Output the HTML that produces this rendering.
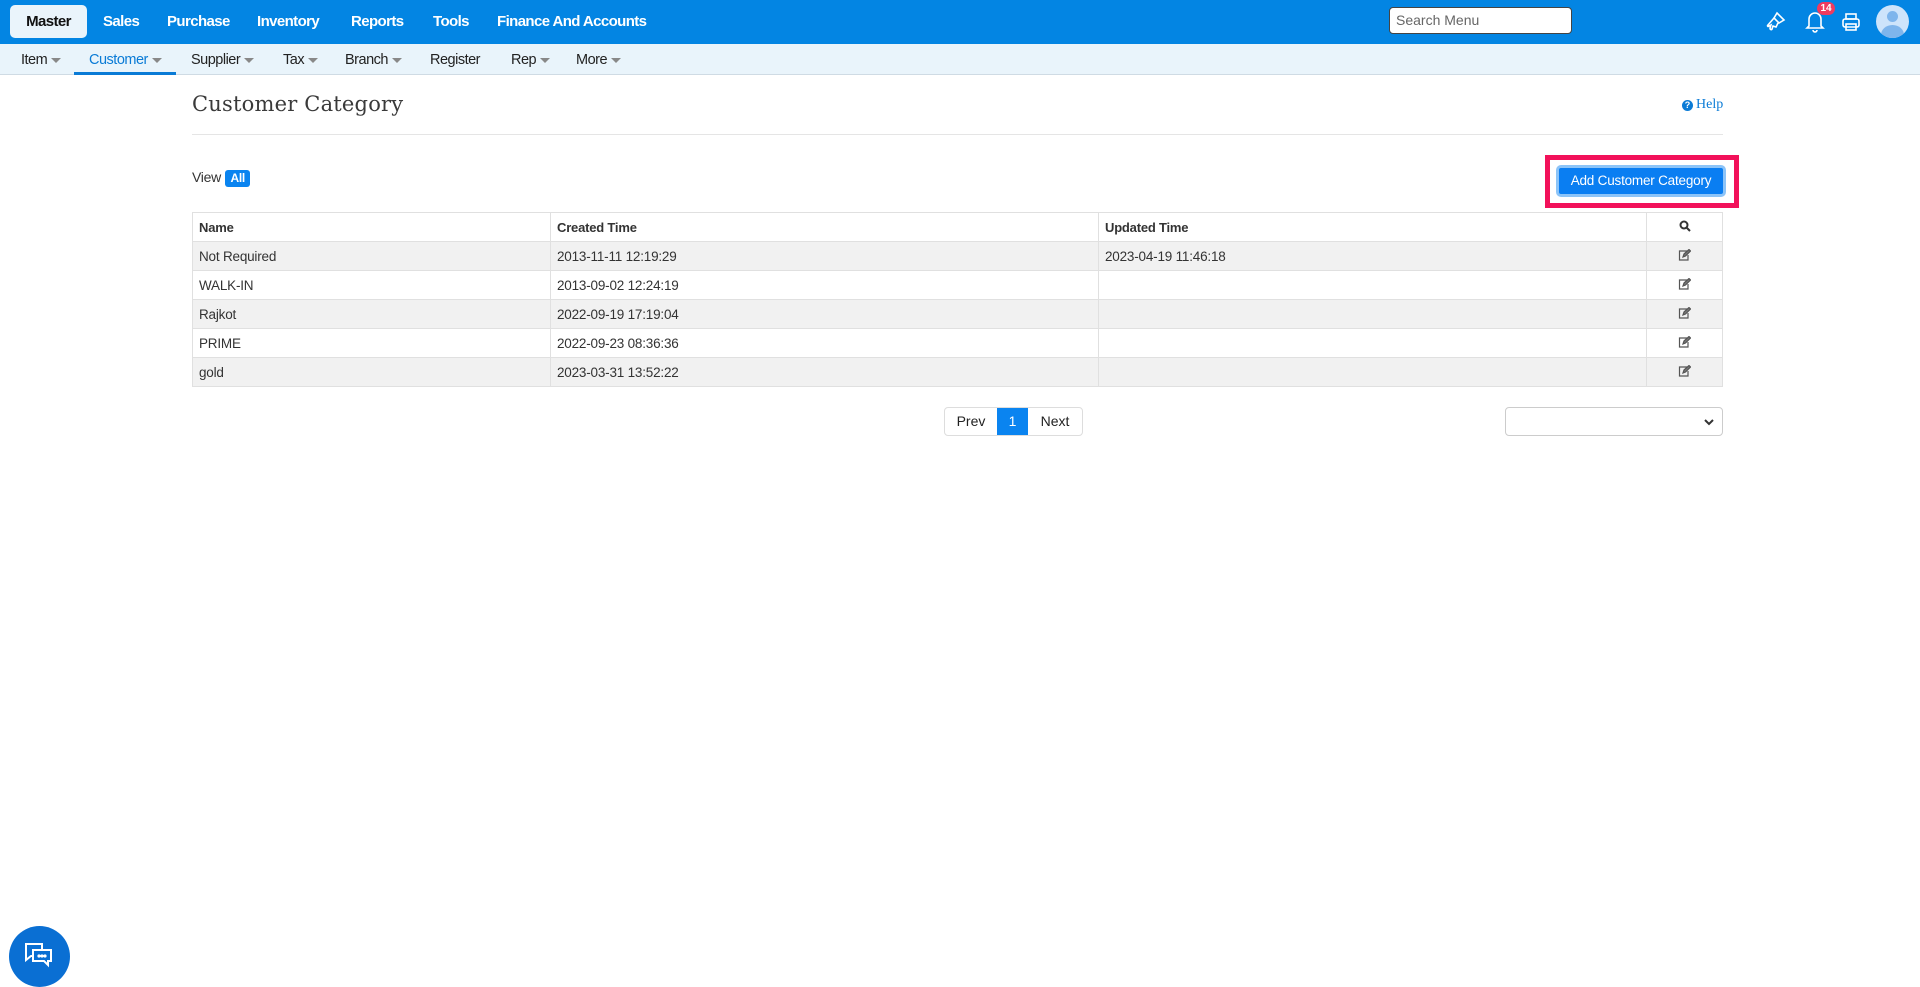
<!DOCTYPE html>
<html><head><meta charset="utf-8"><style>
*{box-sizing:border-box;margin:0;padding:0}
body{width:1920px;height:975px;overflow:hidden;background:#fff;font-family:"Liberation Sans",sans-serif;color:#222;position:relative}
.top{position:absolute;left:0;top:0;width:1920px;height:44px;background:#0385e3}
.top .it{position:absolute;top:0;height:44px;line-height:44px;color:#fff;font-weight:bold;font-size:15px;letter-spacing:-0.6px}
.master{position:absolute;left:10px;top:5px;width:77px;height:33px;background:#eaf4fb;border-radius:5px;color:#111;font-weight:bold;font-size:15px;line-height:33px;text-align:center;letter-spacing:-0.6px}
.search{position:absolute;left:1389px;top:7px;width:183px;height:27px;background:#fff;border:1px solid #444;border-radius:4px;font-size:14px;color:#666;padding-left:6px;line-height:25px}
.sub{position:absolute;left:0;top:44px;width:1920px;height:31px;background:#e9f4fb;border-bottom:1px solid #cfdbe4}
.sub .s{position:absolute;top:1px;height:30px;line-height:30px;font-size:14.5px;color:#222;letter-spacing:-0.5px}
.car{display:inline-block;width:0;height:0;border-left:5px solid transparent;border-right:5px solid transparent;border-top:5px solid #888;margin-left:4px;vertical-align:middle}
h1{position:absolute;left:192px;top:92px;font-family:"DejaVu Serif","Liberation Serif",serif;font-weight:normal;font-size:21px;color:#3a3a3a;letter-spacing:0.2px}
.hr{position:absolute;left:192px;top:134px;width:1531px;height:1px;background:#e5e5e5}
.help{position:absolute;left:1682px;top:97px;font-family:"Liberation Serif",serif;font-size:14px;color:#0a7bd6}
.help i{display:inline-block;width:11px;height:11px;border-radius:50%;background:#0a7bd6;color:#fff;font-size:9px;font-style:normal;font-weight:bold;text-align:center;line-height:11px;font-family:"Liberation Sans";vertical-align:0px;margin-right:3px}
.view{position:absolute;left:192px;top:169px;font-size:14px;color:#333;letter-spacing:-0.3px}
.view b{display:inline-block;background:#0a84f0;color:#fff;font-size:12px;padding:0 5px;border-radius:3px;height:17px;line-height:17px;margin-left:1px}
.red{position:absolute;left:1545px;top:155px;width:194px;height:53px;border:5px solid #f2115a}
.btn{position:absolute;left:1556px;top:165px;width:170px;height:32px;background:#0a7ef2;border:3px solid #8cc4f8;border-radius:5px;color:#fff;font-size:13.5px;text-align:center;line-height:26px;letter-spacing:-0.2px}
table{position:absolute;left:192px;top:212px;width:1531px;border-collapse:collapse;font-size:13.5px;letter-spacing:-0.2px}
td,th{border:1px solid #e0e0e0;height:29px;padding:0 6px;text-align:left;color:#333}
th{font-weight:bold;font-size:13px}
tr:nth-child(even) td{background:#f1f1f1}
td.c,th.c{text-align:center}
.pg{position:absolute;left:944px;top:407px;height:29px;border:1px solid #ddd;border-radius:4px;display:flex;font-size:14px;overflow:hidden}
.pg span{display:block;line-height:27px;text-align:center}
.sel{position:absolute;left:1505px;top:407px;width:218px;height:29px;border:1px solid #ccc;border-radius:4px}
.chat{position:absolute;left:9px;top:926px;width:61px;height:61px;border-radius:50%;background:#0a6fd3}
</style></head><body>
<div class="top">
<div class="master">Master</div>
<div class="it" style="left:103px">Sales</div>
<div class="it" style="left:167px">Purchase</div>
<div class="it" style="left:257px">Inventory</div>
<div class="it" style="left:351px">Reports</div>
<div class="it" style="left:433px">Tools</div>
<div class="it" style="left:497px">Finance And Accounts</div>
<div class="search">Search Menu</div>
<svg style="position:absolute;left:1763px;top:10px" width="24" height="24" viewBox="0 0 24 24" fill="none" stroke="#fff" stroke-width="1.6"><path d="M14 3l7 7-5 3-5-5z"/><path d="M11 8l-6 7c-1 1 0 2 1 1l2-1-1 3c0 2 2 2 2 1l1-3 3 1 2-4"/></svg>
<svg style="position:absolute;left:1804px;top:9px" width="22" height="24" viewBox="0 0 22 24" fill="none" stroke="#fff" stroke-width="1.6"><path d="M5 17V10a6 6 0 0112 0v7l2 2H3z"/><path d="M9 21a2 2 0 004 0"/></svg>
<div style="position:absolute;left:1817px;top:2px;width:18px;height:13px;border-radius:7px;background:#f03a5f;color:#fff;font-size:10px;font-weight:bold;text-align:center;line-height:13px">14</div>
<svg style="position:absolute;left:1841px;top:12px" width="20" height="20" viewBox="0 0 20 20" fill="none" stroke="#fff" stroke-width="1.6"><rect x="5" y="2" width="10" height="5"/><rect x="2" y="7" width="16" height="8" rx="2"/><rect x="5" y="12" width="10" height="6"/></svg>
<div style="position:absolute;left:1876px;top:5px;width:33px;height:33px;border-radius:50%;background:#cde4fb;overflow:hidden"><div style="position:absolute;left:11px;top:6px;width:11px;height:11px;border-radius:50%;background:#7eb5ec"></div><div style="position:absolute;left:5px;top:20px;width:23px;height:20px;border-radius:50%;background:#7eb5ec"></div></div>
</div>
<div class="sub">
<div class="s" style="left:21px">Item<span class="car"></span></div>
<div class="s" style="left:89px;color:#0a7bd6">Customer<span class="car"></span></div>
<div style="position:absolute;left:74px;top:28px;width:102px;height:3px;background:#0a7bd6"></div>
<div class="s" style="left:191px">Supplier<span class="car"></span></div>
<div class="s" style="left:283px">Tax<span class="car"></span></div>
<div class="s" style="left:345px">Branch<span class="car"></span></div>
<div class="s" style="left:430px">Register</div>
<div class="s" style="left:511px">Rep<span class="car"></span></div>
<div class="s" style="left:576px">More<span class="car"></span></div>
</div>
<h1>Customer Category</h1>
<div class="help"><i>?</i>Help</div>
<div class="hr"></div>
<div class="view">View <b>All</b></div>
<div class="red"></div>
<div class="btn">Add Customer Category</div>
<table>
<tr><th style="width:358px">Name</th><th style="width:548px">Created Time</th><th style="width:548px">Updated Time</th><th class="c"><svg width="12" height="12" viewBox="0 0 12 12" fill="none" stroke="#333" stroke-width="2"><circle cx="5" cy="5" r="3.5"/><path d="M7.5 7.5L11 11"/></svg></th></tr>
<tr><td>Not Required</td><td>2013-11-11 12:19:29</td><td>2023-04-19 11:46:18</td><td class="c">E</td></tr>
<tr><td>WALK-IN</td><td>2013-09-02 12:24:19</td><td></td><td class="c">E</td></tr>
<tr><td>Rajkot</td><td>2022-09-19 17:19:04</td><td></td><td class="c">E</td></tr>
<tr><td>PRIME</td><td>2022-09-23 08:36:36</td><td></td><td class="c">E</td></tr>
<tr><td>gold</td><td>2023-03-31 13:52:22</td><td></td><td class="c">E</td></tr>
</table>
<div class="pg"><span style="width:52px">Prev</span><span style="width:31px;background:#0a84f0;color:#fff">1</span><span style="width:54px">Next</span></div>
<div class="sel"><svg style="position:absolute;right:8px;top:10px" width="10" height="8" viewBox="0 0 10 8" fill="none" stroke="#333" stroke-width="2"><path d="M1 2l4 4 4-4"/></svg></div>
<div class="chat"><svg style="position:absolute;left:13px;top:14px" width="36" height="32" viewBox="0 0 36 32" fill="none" stroke="#fff" stroke-width="2"><path d="M4 4h16v12H9l-5 4z" fill="#0a6fd3"/><path d="M11 10h18v11h-3v4l-4-4H11z" fill="#0a6fd3"/><circle cx="17" cy="16" r=".6" fill="#fff"/><circle cx="20" cy="16" r=".6" fill="#fff"/><circle cx="23" cy="16" r=".6" fill="#fff"/></svg></div>
<script>
document.querySelectorAll('td.c').forEach(function(t){t.innerHTML='<svg width="13" height="12" viewBox="0 0 13 12" fill="none" stroke="#555" stroke-width="1.2"><path d="M9 2H1.5v9h8.5V6"/><path d="M5 8l1-3 5-4.5 1.5 1.5L7.5 7z" fill="#777"/></svg>'});
</script>
</body></html>
